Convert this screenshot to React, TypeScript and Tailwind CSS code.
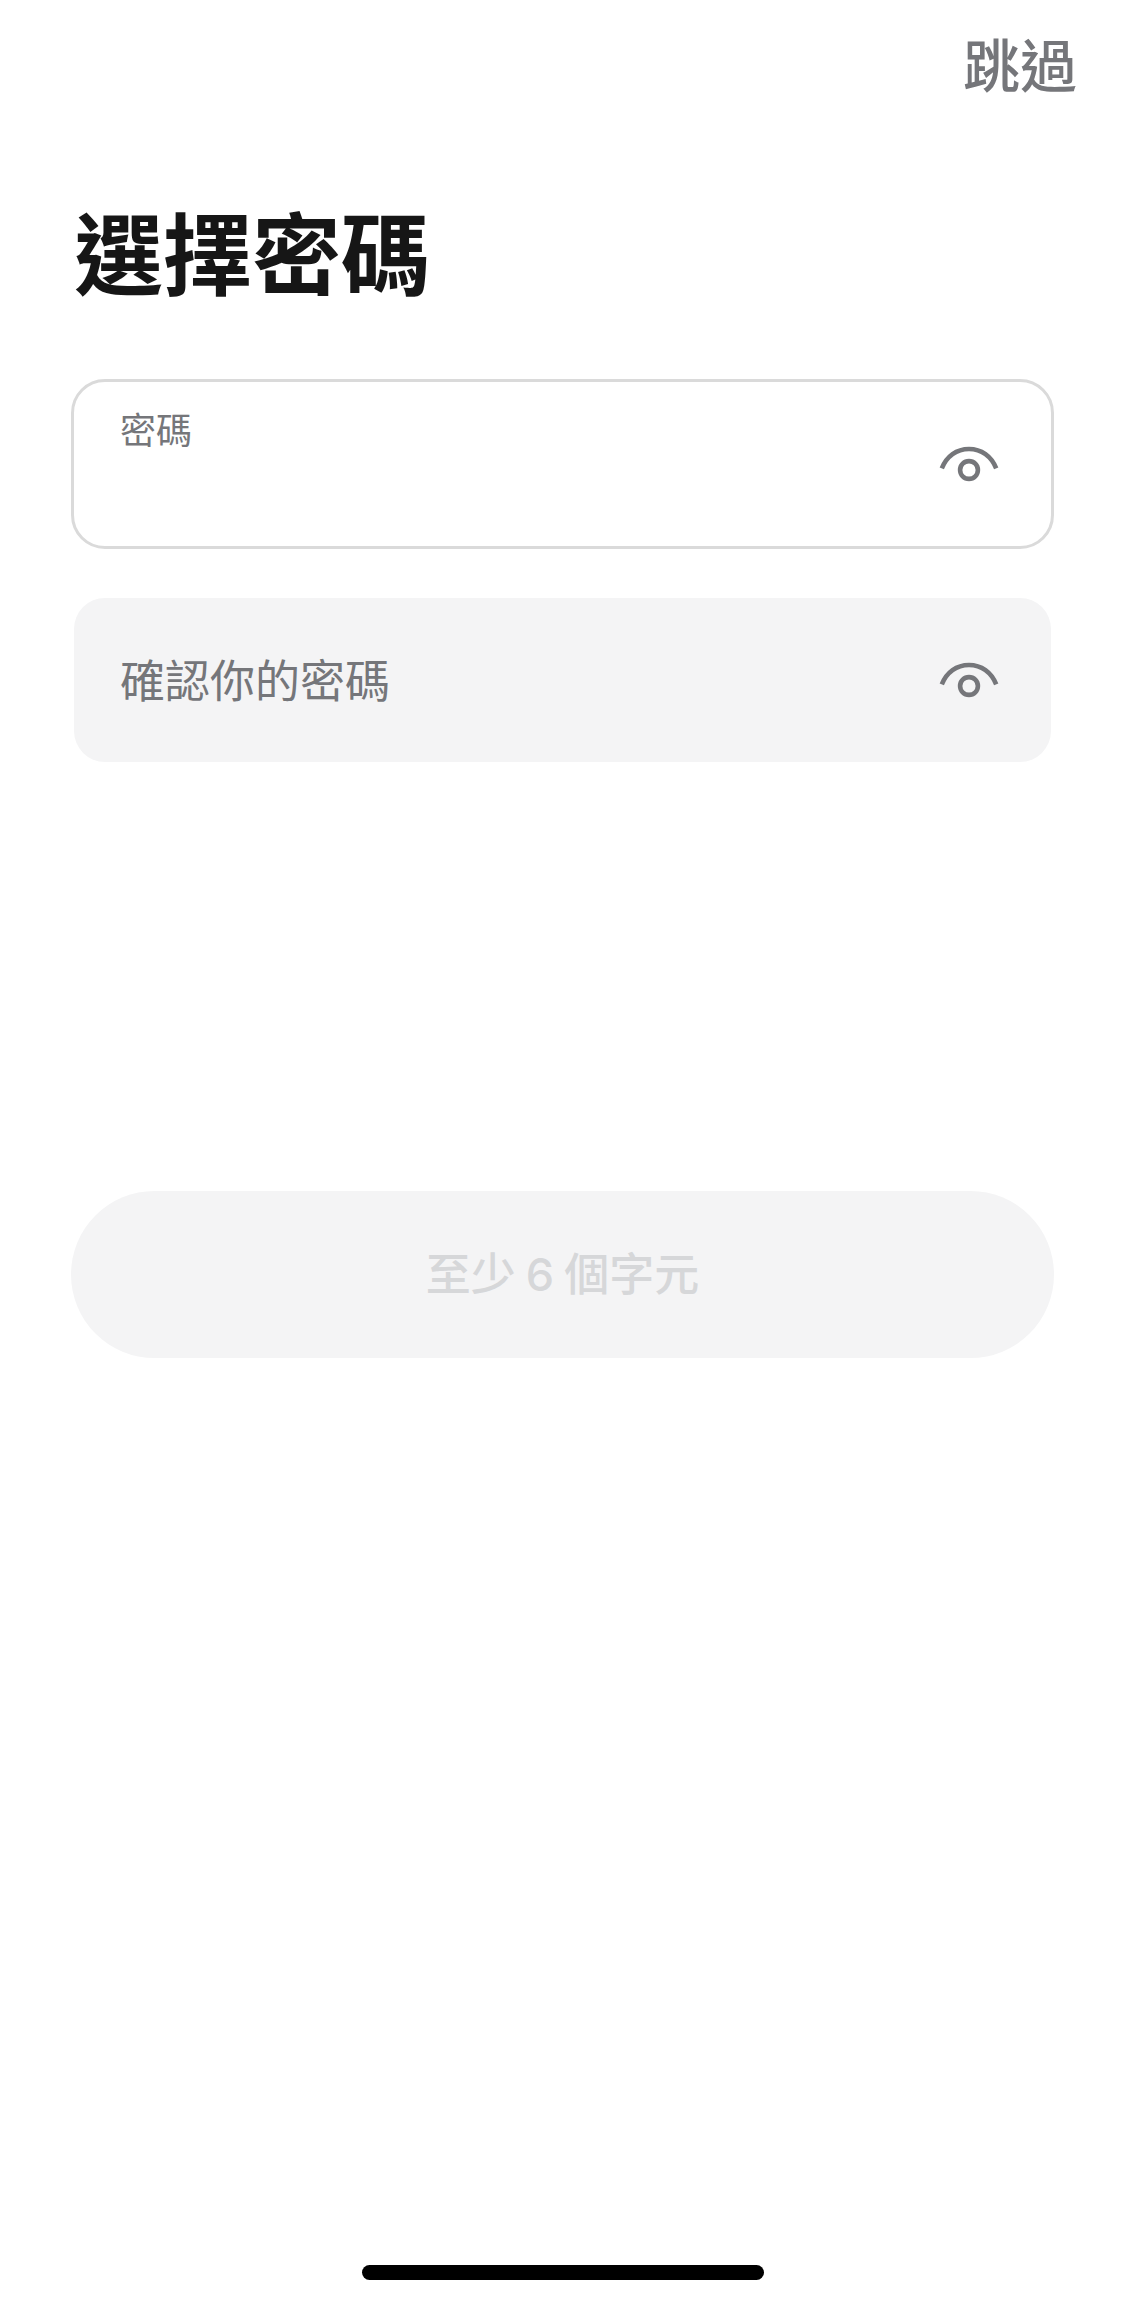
import { useState } from "react";

function EyeIcon() {
  return (
    <svg viewBox="0 0 72 72" fill="none" stroke="currentColor" strokeWidth="4.6" className="size-[72px]">
      <path d="M8.8 40.4C13.6 28.2 23.6 21 36 21S58.4 28.2 63.2 40.4" />
      <circle cx="36" cy="42" r="8.9" />
    </svg>
  );
}

function EyeButton({ shown, onClick }: { shown: boolean; onClick: () => void }) {
  return (
    <button
      type="button"
      onClick={onClick}
      aria-label={shown ? "隱藏密碼" : "顯示密碼"}
      className="shrink-0 text-[#75767a]"
    >
      <EyeIcon />
    </button>
  );
}

export default function App() {
  const [password, setPassword] = useState("");
  const [confirmation, setConfirmation] = useState("");
  const [showPassword, setShowPassword] = useState(false);
  const [showConfirmation, setShowConfirmation] = useState(false);

  return (
    <main className="flex min-h-screen flex-col bg-white font-['Noto_Sans_CJK_TC',sans-serif] text-[#161616]">
      <header className="flex justify-end px-12 pt-6">
        <button type="button" className="text-[57px] leading-[76px] font-medium text-[#75767a]">
          跳過
        </button>
      </header>

      <form className="flex flex-col px-[71px] pt-[100px]" onSubmit={(e) => e.preventDefault()}>
        <h1 className="px-[3px] text-[89px] leading-[100px] font-bold">選擇密碼</h1>

        <div className="mt-[79px] flex flex-col gap-[46px]">
          <div className="flex h-[170px] items-center rounded-[34px] border-3 border-[#dadada] px-[46px]">
            <div className="flex min-w-0 flex-1 flex-col self-stretch py-6">
              <label htmlFor="password" className="text-[36px] leading-[44px] text-[#75767a]">
                密碼
              </label>
              <input
                id="password"
                type={showPassword ? "text" : "password"}
                value={password}
                onChange={(e) => setPassword(e.target.value)}
                className="w-full flex-1 text-[45px] outline-none"
              />
            </div>
            <EyeButton shown={showPassword} onClick={() => setShowPassword((v) => !v)} />
          </div>

          <div className="flex h-[170px] items-center rounded-[34px] border-3 border-transparent bg-[#f4f4f5] bg-clip-padding px-[46px]">
            <input
              type={showConfirmation ? "text" : "password"}
              value={confirmation}
              onChange={(e) => setConfirmation(e.target.value)}
              placeholder="確認你的密碼"
              aria-label="確認你的密碼"
              className="h-full min-w-0 flex-1 pb-1 text-[45px] outline-none placeholder:text-[#75767a]"
            />
            <EyeButton shown={showConfirmation} onClick={() => setShowConfirmation((v) => !v)} />
          </div>
        </div>

        <button
          type="submit"
          disabled={password.length < 6 || password !== confirmation}
          className="mt-[426px] h-[167px] rounded-full bg-[#f4f4f5] pb-0.5 text-[45px] font-medium text-[#d6d7d9]"
        >
          至少 <span className="font-['Inter',sans-serif]">6</span> 個字元
        </button>
      </form>

      <div className="mx-auto mt-auto mb-6 h-[15px] w-[402px] rounded-full bg-black" />
    </main>
  );
}
